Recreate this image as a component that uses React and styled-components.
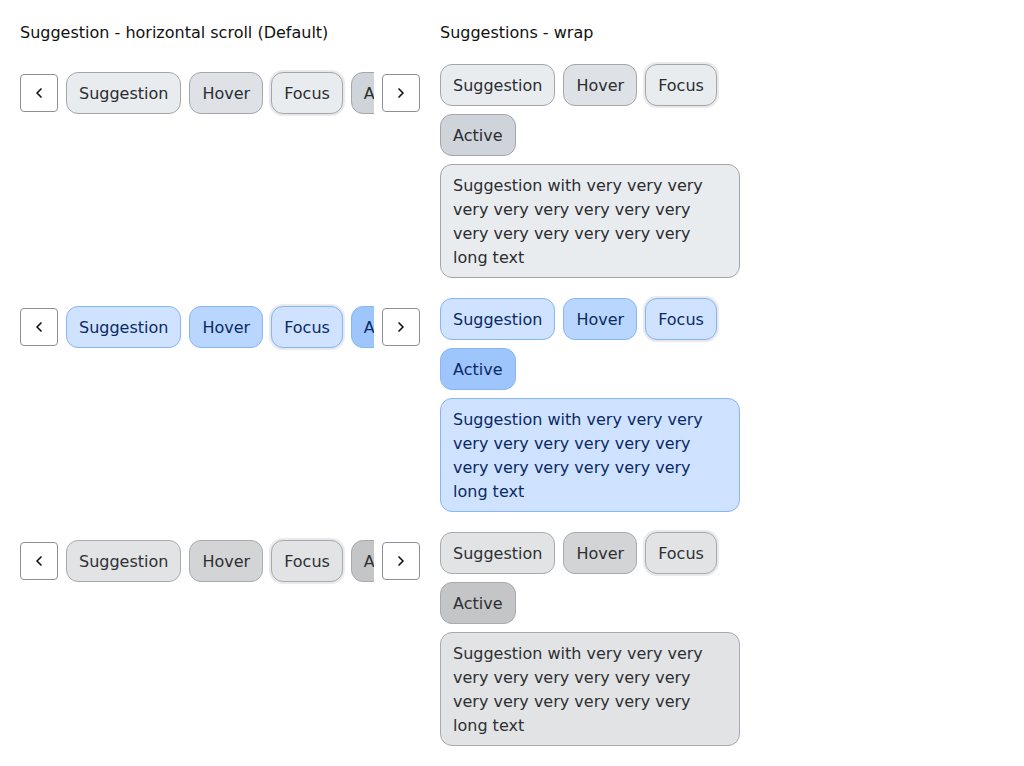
import React from 'react'
import styled, { createGlobalStyle, css } from 'styled-components'
import { ChevronLeft, ChevronRight } from 'lucide-react'

const GlobalStyle = createGlobalStyle`
body {
  margin: 0;
  background: #fff;
  font-family: "DejaVu Sans", "Liberation Sans", sans-serif;
  color: #111;
}
`

const tones = {
  neutral: {
    text: '#2b2d30',
    border: '#a3a7ac',
    default: '#e9ecef',
    hover: '#dee2e6',
    active: '#ced4da',
  },
  blue: {
    text: '#0b2a63',
    border: '#86b5f8',
    default: '#cfe2ff',
    hover: '#b9d6fe',
    active: '#9fc5fd',
  },
  gray: {
    text: '#2e3033',
    border: '#a8aaad',
    default: '#e2e3e5',
    hover: '#d3d4d6',
    active: '#c4c5c7',
  },
}

const Page = styled.div`
  display: grid;
  grid-template-columns: 400px 300px;
  column-gap: 20px;
  row-gap: 20px;
  align-items: start;
  padding: 20px;
`

const Title = styled.div`
  font-size: 16px;
  line-height: 24px;
  padding-top: 1px;
  margin-bottom: -1px;
  color: #111;
`

const ScrollRow = styled.div`
  display: flex;
  align-items: center;
  gap: 8px;
`

const Scroller = styled.div`
  flex: 1;
  min-width: 0;
  display: flex;
  gap: 8px;
  padding: 8px 0;
  overflow: hidden;
`

const NavButton = styled.button`
  flex: none;
  width: 38px;
  height: 38px;
  display: flex;
  align-items: center;
  justify-content: center;
  padding: 0;
  background: #fff;
  border: 1px solid #8e8e98;
  border-radius: 4px;
  color: #111;
`

const Wrap = styled.div`
  display: flex;
  flex-wrap: wrap;
  gap: 8px;
  width: 300px;
`

const Chip = styled.button`
  flex: none;
  max-width: 100%;
  font-family: "DejaVu Sans", "Liberation Sans", sans-serif;
  font-size: 16px;
  line-height: 24px;
  padding: 9px 12px 7px;
  border-radius: 12px;
  text-align: left;
  white-space: ${(p) => (p.long ? 'normal' : 'nowrap')};
  ${(p) => {
    const t = tones[p.tone]
    const bg = p.state === 'hover' ? t.hover : p.state === 'active' ? t.active : t.default
    return css`
      color: ${t.text};
      background: ${bg};
      border: 1px solid ${t.border};
      box-shadow: ${p.state === 'focus' ? '0 0 1px 2px rgba(0, 0, 0, 0.09)' : 'none'};
    `
  }}
`

const states = [
  ['default', 'Suggestion'],
  ['hover', 'Hover'],
  ['focus', 'Focus'],
  ['active', 'Active'],
]

const ScrollGroup = ({ tone }) => (
  <ScrollRow>
    <NavButton aria-label="previous">
      <ChevronLeft size={16} strokeWidth={2.5} />
    </NavButton>
    <Scroller>
      {states.map(([s, label]) => (
        <Chip key={s} tone={tone} state={s}>{label}</Chip>
      ))}
    </Scroller>
    <NavButton aria-label="next">
      <ChevronRight size={16} strokeWidth={2.5} />
    </NavButton>
  </ScrollRow>
)

const WrapGroup = ({ tone }) => (
  <Wrap>
    {states.map(([s, label]) => (
      <Chip key={s} tone={tone} state={s}>{label}</Chip>
    ))}
    <Chip tone={tone} state="default" long>
      Suggestion with very very very very very very very very very very very very very very very long text
    </Chip>
  </Wrap>
)

export default function App() {
  const groups = ['neutral', 'blue', 'gray']
  return (
    <>
      <GlobalStyle />
      <Page>
        <Title>Suggestion - horizontal scroll (Default)</Title>
        <Title>Suggestions - wrap</Title>
        {groups.map((g) => (
          <React.Fragment key={g}>
            <ScrollGroup tone={g} />
            <WrapGroup tone={g} />
          </React.Fragment>
        ))}
      </Page>
    </>
  )
}
